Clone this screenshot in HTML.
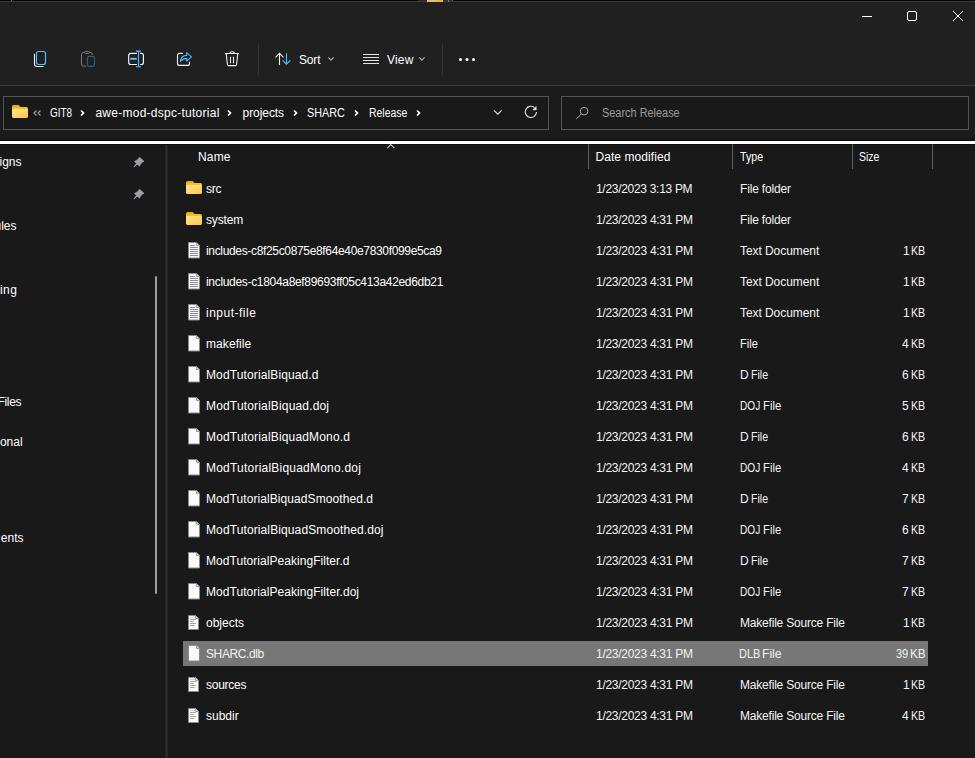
<!DOCTYPE html>
<html><head><meta charset="utf-8">
<style>
*{margin:0;padding:0;box-sizing:border-box}
html,body{width:975px;height:758px;overflow:hidden;background:#191919}
body{position:relative;font-family:"Liberation Sans",sans-serif;font-size:12px;color:#fff}
.abs{position:absolute}
.t{position:absolute;line-height:14px;white-space:nowrap;font-size:12px}
.t i{font-style:normal;letter-spacing:-0.62px}
.ic{position:absolute;overflow:visible}
#top{position:absolute;left:0;top:0;width:975px;height:85px;background:#202020}
#topline0{position:absolute;left:0;top:0;width:975px;height:1px;background:#050505}
#topline1{position:absolute;left:0;top:1px;width:975px;height:1px;background:#3a3a3a}
#sep85{position:absolute;left:0;top:85px;width:975px;height:1px;background:#3c3c3c}
#addrrow{position:absolute;left:0;top:86px;width:975px;height:54px;background:#1b1b1b}
.box{position:absolute;border:1px solid #555;background:#191919}
#blk{position:absolute;left:0;top:140px;width:975px;height:1px;background:#0a0a0a}
#wht{position:absolute;left:0;top:141px;width:975px;height:3px;background:#fff}
#blk2{position:absolute;left:0;top:144px;width:975px;height:1px;background:#101010}
#divider{position:absolute;left:164px;top:145px;width:4px;height:613px;background:linear-gradient(90deg,#161616 0 1px,#252525 1px 2px,#2f2f2f 2px 3px,#232323 3px 4px)}
#thumb{position:absolute;left:155px;top:276px;width:2px;height:318px;background:#9f9f9f;border-radius:1px}
.cd{position:absolute;top:144px;width:1px;height:25px;background:#5e5e5e}
.sel{position:absolute;left:183px;width:745px;height:25px;background:#777}
.nm{color:#fff}
.dt,.ty,.sz{color:#f4f4f4}
.s{color:#f2f2f2}
.nv{color:#fff}
.tb{color:#fff}
.hd{color:#fff}
.ph{color:#9c9c9c}
</style></head><body>
<div id="top"></div>
<div id="topline0"></div>
<div id="topline1"></div>
<div class="abs" style="left:418px;top:0;width:9px;height:1px;background:#2a2a2a"></div>
<div class="abs" style="left:427px;top:0;width:16px;height:2px;background:linear-gradient(90deg,#d6c58a,#e2b44c)"></div>
<div class="abs" style="left:443px;top:0;width:10px;height:1px;background:#2e2e2e"></div>
<div class="abs" style="left:448px;top:0;width:1px;height:2px;background:#777"></div>
<div class="abs" style="left:452px;top:0;width:1px;height:1px;background:#555"></div>
<div class="abs" style="left:11px;top:0;width:1px;height:1px;background:#666"></div>

<!-- window controls -->
<svg class="ic" style="left:852px;top:10px" width="112" height="12" viewBox="0 0 112 12">
 <path d="M10 6.5h10" stroke="#fff" stroke-width="1"/>
 <rect x="55.5" y="1.5" width="9" height="9" rx="1.5" fill="none" stroke="#fff" stroke-width="1"/>
 <path d="M101 1l10 10M111 1l-10 10" stroke="#fff" stroke-width="1"/>
</svg>

<!-- toolbar icons -->
<svg class="ic" style="left:30px;top:48px" width="220" height="22" viewBox="0 0 220 22">
 <!-- copy -->
 <path d="M4.5 5.8v10.2a2.5 2.5 0 0 0 2.5 2.5h6.5" fill="none" stroke="#f0f0f0" stroke-width="1.1"/>
 <rect x="6.5" y="3.5" width="9" height="13" rx="2" fill="none" stroke="#4cc2ff" stroke-width="1.2"/>
 <!-- paste (disabled) -->
 <path d="M56 18.2h-2.5a2 2 0 0 1-2-2V6.4a2 2 0 0 1 2-2h6.8a2 2 0 0 1 2 2v0.6" fill="none" stroke="#7c7c7c" stroke-width="1"/>
 <rect x="54.6" y="3.4" width="4.8" height="2" rx="1" fill="#202020" stroke="#7c7c7c" stroke-width="1"/>
 <rect x="57.4" y="8.4" width="7.1" height="10" rx="1.8" fill="none" stroke="#2a6386" stroke-width="1.1"/>
 <!-- rename -->
 <path d="M107 5.4h-6.3a2 2 0 0 0-2 2v7.1a2 2 0 0 0 2 2h6.3M110 5.4h1.4a2 2 0 0 1 2 2v7.1a2 2 0 0 1-2 2h-1.4" fill="none" stroke="#f0f0f0" stroke-width="1.2"/>
 <path d="M108.5 3.3v15.2M106 3.1h5M106 18.7h5" fill="none" stroke="#4cc2ff" stroke-width="1.1"/>
 <path d="M100.3 10.8h6.4" stroke="#4cc2ff" stroke-width="2"/>
 <!-- share -->
 <path d="M153 5.4h-3.5a2 2 0 0 0-2 2v8a2 2 0 0 0 2 2h8a2 2 0 0 0 2-2v-1.7" fill="none" stroke="#f0f0f0" stroke-width="1.1"/>
 <path d="M150.3 13.3C151 9.5 153.5 7.4 156.7 7.4V4.6L161.4 8.9L156.7 13.2V10.4C154.2 10.4 152.2 11.4 150.3 13.3z" fill="none" stroke="#4cc2ff" stroke-width="1.1" stroke-linejoin="round"/>
 <!-- delete -->
 <path d="M195 5.5h14M200 5.4a2.2 1.7 0 0 1 4.4 0" fill="none" stroke="#f0f0f0" stroke-width="1.1"/>
 <path d="M196.2 5.6l1.2 10.6a1.5 1.5 0 0 0 1.5 1.4h6.2a1.5 1.5 0 0 0 1.5-1.4l1.2-10.6M200.5 8.8v6.4M203.5 8.8v6.4" fill="none" stroke="#f0f0f0" stroke-width="1.1"/>
</svg>
<div class="abs" style="left:258px;top:43px;width:1px;height:32px;background:#333"></div>
<div class="abs" style="left:442px;top:43px;width:1px;height:32px;background:#333"></div>
<svg class="ic" style="left:270px;top:48px" width="210" height="22" viewBox="0 0 210 22">
 <path d="M9.5 17V5.6M5.5 9.4l4-4 4 4" fill="none" stroke="#f0f0f0" stroke-width="1.1"/>
 <path d="M16.5 5.2v10.6M12.6 12.3l3.9 3.9 3.9-3.9" fill="none" stroke="#4cc2ff" stroke-width="1.1"/>
 <path d="M58.3 9.3l2.7 2.8 2.7-2.8" fill="none" stroke="#b4b4b4" stroke-width="1.1"/>
 <path d="M93 6.5h16M93 9.5h16M93 12.5h16M93 15.5h16" stroke="#e6e6e6" stroke-width="1"/>
 <path d="M149.2 9.3l2.7 2.8 2.7-2.8" fill="none" stroke="#b4b4b4" stroke-width="1.1"/>
 <circle cx="190.5" cy="11.5" r="1.5" fill="#fff"/>
 <circle cx="197" cy="11.5" r="1.5" fill="#fff"/>
 <circle cx="203.5" cy="11.5" r="1.5" fill="#fff"/>
</svg>

<div id="sep85"></div>
<div id="addrrow"></div>
<div class="box" style="left:3px;top:96px;width:546px;height:34px"></div>
<div class="box" style="left:561px;top:96px;width:408px;height:34px"></div>

<!-- address contents -->
<svg class="ic" style="left:12px;top:105px" width="16" height="13" viewBox="0 0 16 13"><defs><linearGradient id="afg" x1="0" y1="0" x2="1" y2="1"><stop offset="0" stop-color="#ffe59a"/><stop offset="1" stop-color="#fdc73f"/></linearGradient></defs><path d="M1.5 0h5.2l1.6 1.6V5H0V1.5A1.5 1.5 0 0 1 1.5 0z" fill="#ebaa0a"/><rect x="0" y="2" width="16" height="4" rx="1.5" fill="#f4bd2c"/><rect x="0" y="3.9" width="16" height="9.1" rx="1.4" fill="url(#afg)"/></svg>
<svg class="ic" style="left:30px;top:104px" width="400" height="16" viewBox="0 0 400 16">
 <path d="M6.5 6.5l-2.5 2.5 2.5 2.5M10.5 6.5l-2.5 2.5 2.5 2.5" fill="none" stroke="#a0a0a0" stroke-width="1.2"/>
 <path d="M51 6.5l2.5 2.5-2.5 2.5" fill="none" stroke="#fff" stroke-width="1.7"/>
 <path d="M198 6.5l2.5 2.5-2.5 2.5" fill="none" stroke="#fff" stroke-width="1.7"/>
 <path d="M264 6.5l2.5 2.5-2.5 2.5" fill="none" stroke="#fff" stroke-width="1.7"/>
 <path d="M325 6.5l2.5 2.5-2.5 2.5" fill="none" stroke="#fff" stroke-width="1.7"/>
 <path d="M387 6.5l2.5 2.5-2.5 2.5" fill="none" stroke="#fff" stroke-width="1.7"/>
</svg>
<svg class="ic" style="left:488px;top:102px" width="56" height="20" viewBox="0 0 56 20">
 <path d="M6 8.3l3.8 3.8 3.8-3.8" fill="none" stroke="#e0e0e0" stroke-width="1.1"/>
 <path d="M46.5 5.6A5.6 5.6 0 1 0 48.5 10.1" fill="none" stroke="#e0e0e0" stroke-width="1.15"/>
 <path d="M48.3 4.3V7.9H44.7Z" fill="#e8e8e8" stroke="#e8e8e8" stroke-width="0.4" stroke-linejoin="round"/>
</svg>
<svg class="ic" style="left:574px;top:105px" width="16" height="16" viewBox="0 0 16 16">
 <circle cx="10.1" cy="6.2" r="3.8" fill="none" stroke="#a8a8a8" stroke-width="1"/>
 <path d="M7.4 8.9L2.2 14" stroke="#a8a8a8" stroke-width="1"/>
</svg>

<div id="blk"></div>
<div id="wht"></div>
<div id="blk2"></div>

<!-- nav pane -->
<svg class="ic" style="left:133px;top:156px" width="12" height="44" viewBox="0 0 12 44">
 <g id="pin" fill="#9ba3a8" stroke="#9ba3a8" stroke-width="0.6" stroke-linejoin="round">
 <path d="M6.6 1.2L11 5.2L8.4 6.9L6.3 10.2L1.4 5.6L4.7 3.6Z"/>
 <path d="M4.2 7.6L1.1 10.8" stroke-width="1.3" fill="none"/>
 </g>
 <use href="#pin" y="32"/>
</svg>
<div id="thumb"></div>
<div id="divider"></div>

<!-- header -->
<svg class="ic" style="left:386px;top:143px" width="10" height="7" viewBox="0 0 10 7"><path d="M1.2 5.2l3.6-3.6 3.6 3.6" fill="none" stroke="#c4c4c4" stroke-width="1.1"/></svg>
<div class="cd" style="left:588px"></div>
<div class="cd" style="left:732px"></div>
<div class="cd" style="left:852px"></div>
<div class="cd" style="left:932px"></div>

<svg class="ic" style="left:186px;top:181px" width="16" height="13" viewBox="0 0 16 13"><defs><linearGradient id="fg0" x1="0" y1="0" x2="1" y2="1"><stop offset="0" stop-color="#ffe59a"/><stop offset="1" stop-color="#fdc73f"/></linearGradient></defs><path d="M1.5 0h5.2l1.6 1.6V5H0V1.5A1.5 1.5 0 0 1 1.5 0z" fill="#ebaa0a"/><rect x="0" y="2" width="16" height="4" rx="1.5" fill="#f4bd2c"/><rect x="0" y="3.9" width="16" height="9.1" rx="1.4" fill="url(#fg0)"/></svg>
<svg class="ic" style="left:186px;top:212px" width="16" height="13" viewBox="0 0 16 13"><defs><linearGradient id="fg1" x1="0" y1="0" x2="1" y2="1"><stop offset="0" stop-color="#ffe59a"/><stop offset="1" stop-color="#fdc73f"/></linearGradient></defs><path d="M1.5 0h5.2l1.6 1.6V5H0V1.5A1.5 1.5 0 0 1 1.5 0z" fill="#ebaa0a"/><rect x="0" y="2" width="16" height="4" rx="1.5" fill="#f4bd2c"/><rect x="0" y="3.9" width="16" height="9.1" rx="1.4" fill="url(#fg1)"/></svg>
<svg class="ic" style="left:187px;top:242px" width="14" height="17" viewBox="0 0 14 17"><path d="M1.5 0.5h8l3 3v12.5h-11z" fill="#fafafa" stroke="#8a8a8a" stroke-width="1"/><path d="M9.5 0.5v3h3" fill="#d8d8d8" stroke="#9a9a9a" stroke-width="1"/><path d="M3 3.5h5M3 5.5h8M3 7.5h8M3 9.5h8M3 11.5h8M3 13.5h8" stroke="#8c8c8c" stroke-width="1"/></svg>
<svg class="ic" style="left:187px;top:273px" width="14" height="17" viewBox="0 0 14 17"><path d="M1.5 0.5h8l3 3v12.5h-11z" fill="#fafafa" stroke="#8a8a8a" stroke-width="1"/><path d="M9.5 0.5v3h3" fill="#d8d8d8" stroke="#9a9a9a" stroke-width="1"/><path d="M3 3.5h5M3 5.5h8M3 7.5h8M3 9.5h8M3 11.5h8M3 13.5h8" stroke="#8c8c8c" stroke-width="1"/></svg>
<svg class="ic" style="left:187px;top:304px" width="14" height="17" viewBox="0 0 14 17"><path d="M1.5 0.5h8l3 3v12.5h-11z" fill="#fafafa" stroke="#8a8a8a" stroke-width="1"/><path d="M9.5 0.5v3h3" fill="#d8d8d8" stroke="#9a9a9a" stroke-width="1"/><path d="M3 3.5h5M3 5.5h8M3 7.5h8M3 9.5h8M3 11.5h8M3 13.5h8" stroke="#8c8c8c" stroke-width="1"/></svg>
<svg class="ic" style="left:187px;top:335px" width="14" height="17" viewBox="0 0 14 17"><path d="M1.5 0.5h8l3 3v12.5h-11z" fill="#fafafa" stroke="#8a8a8a" stroke-width="1"/><path d="M9.5 0.5v3h3" fill="#d8d8d8" stroke="#9a9a9a" stroke-width="1"/></svg>
<svg class="ic" style="left:187px;top:366px" width="14" height="17" viewBox="0 0 14 17"><path d="M1.5 0.5h8l3 3v12.5h-11z" fill="#fafafa" stroke="#8a8a8a" stroke-width="1"/><path d="M9.5 0.5v3h3" fill="#d8d8d8" stroke="#9a9a9a" stroke-width="1"/></svg>
<svg class="ic" style="left:187px;top:397px" width="14" height="17" viewBox="0 0 14 17"><path d="M1.5 0.5h8l3 3v12.5h-11z" fill="#fafafa" stroke="#8a8a8a" stroke-width="1"/><path d="M9.5 0.5v3h3" fill="#d8d8d8" stroke="#9a9a9a" stroke-width="1"/></svg>
<svg class="ic" style="left:187px;top:428px" width="14" height="17" viewBox="0 0 14 17"><path d="M1.5 0.5h8l3 3v12.5h-11z" fill="#fafafa" stroke="#8a8a8a" stroke-width="1"/><path d="M9.5 0.5v3h3" fill="#d8d8d8" stroke="#9a9a9a" stroke-width="1"/></svg>
<svg class="ic" style="left:187px;top:459px" width="14" height="17" viewBox="0 0 14 17"><path d="M1.5 0.5h8l3 3v12.5h-11z" fill="#fafafa" stroke="#8a8a8a" stroke-width="1"/><path d="M9.5 0.5v3h3" fill="#d8d8d8" stroke="#9a9a9a" stroke-width="1"/></svg>
<svg class="ic" style="left:187px;top:490px" width="14" height="17" viewBox="0 0 14 17"><path d="M1.5 0.5h8l3 3v12.5h-11z" fill="#fafafa" stroke="#8a8a8a" stroke-width="1"/><path d="M9.5 0.5v3h3" fill="#d8d8d8" stroke="#9a9a9a" stroke-width="1"/></svg>
<svg class="ic" style="left:187px;top:521px" width="14" height="17" viewBox="0 0 14 17"><path d="M1.5 0.5h8l3 3v12.5h-11z" fill="#fafafa" stroke="#8a8a8a" stroke-width="1"/><path d="M9.5 0.5v3h3" fill="#d8d8d8" stroke="#9a9a9a" stroke-width="1"/></svg>
<svg class="ic" style="left:187px;top:552px" width="14" height="17" viewBox="0 0 14 17"><path d="M1.5 0.5h8l3 3v12.5h-11z" fill="#fafafa" stroke="#8a8a8a" stroke-width="1"/><path d="M9.5 0.5v3h3" fill="#d8d8d8" stroke="#9a9a9a" stroke-width="1"/></svg>
<svg class="ic" style="left:187px;top:583px" width="14" height="17" viewBox="0 0 14 17"><path d="M1.5 0.5h8l3 3v12.5h-11z" fill="#fafafa" stroke="#8a8a8a" stroke-width="1"/><path d="M9.5 0.5v3h3" fill="#d8d8d8" stroke="#9a9a9a" stroke-width="1"/></svg>
<svg class="ic" style="left:187px;top:615px" width="13" height="16" viewBox="0 0 13 16"><path d="M1.5 0.5h7l3 3v11h-10z" fill="#fafafa" stroke="#8a8a8a" stroke-width="1"/><path d="M8.5 0.5v3h3" fill="#dcdcdc" stroke="#a0a0a0" stroke-width="1"/><path d="M3.3 2.5h4.5" stroke="#cfcfcf" stroke-width="1"/><path d="M3 4.5h6M3 6.5h3.6M3 8.5h6M3 10.5h4.5" stroke="#a4a4a4" stroke-width="1"/></svg>
<div class="sel" style="top:641px"></div>
<svg class="ic" style="left:187px;top:645px" width="14" height="17" viewBox="0 0 14 17"><path d="M1.5 0.5h8l3 3v12.5h-11z" fill="#fafafa" stroke="#8a8a8a" stroke-width="1"/><path d="M9.5 0.5v3h3" fill="#d8d8d8" stroke="#9a9a9a" stroke-width="1"/></svg>
<svg class="ic" style="left:187px;top:677px" width="13" height="16" viewBox="0 0 13 16"><path d="M1.5 0.5h7l3 3v11h-10z" fill="#fafafa" stroke="#8a8a8a" stroke-width="1"/><path d="M8.5 0.5v3h3" fill="#dcdcdc" stroke="#a0a0a0" stroke-width="1"/><path d="M3.3 2.5h4.5" stroke="#cfcfcf" stroke-width="1"/><path d="M3 4.5h6M3 6.5h3.6M3 8.5h6M3 10.5h4.5" stroke="#a4a4a4" stroke-width="1"/></svg>
<svg class="ic" style="left:187px;top:708px" width="13" height="16" viewBox="0 0 13 16"><path d="M1.5 0.5h7l3 3v11h-10z" fill="#fafafa" stroke="#8a8a8a" stroke-width="1"/><path d="M8.5 0.5v3h3" fill="#dcdcdc" stroke="#a0a0a0" stroke-width="1"/><path d="M3.3 2.5h4.5" stroke="#cfcfcf" stroke-width="1"/><path d="M3 4.5h6M3 6.5h3.6M3 8.5h6M3 10.5h4.5" stroke="#a4a4a4" stroke-width="1"/></svg>
<div id="n0" class="t nm" style="top:182px;left:206.00px;letter-spacing:-0.250px;">src</div>
<div id="d0" class="t dt" style="top:182px;left:596.00px;letter-spacing:-0.300px;">1/23/2023 3:13 PM</div>
<div id="y0" class="t ty" style="top:182px;left:740.00px;letter-spacing:-0.170px;">File folder</div>
<div id="n1" class="t nm" style="top:213px;left:206.00px;letter-spacing:-0.160px;">system</div>
<div id="d1" class="t dt" style="top:213px;left:596.00px;letter-spacing:-0.281px;">1/23/2023 4:31 PM</div>
<div id="y1" class="t ty" style="top:213px;left:740.00px;letter-spacing:-0.170px;">File folder</div>
<div id="n2" class="t nm" style="top:244px;left:206.00px;letter-spacing:-0.338px;">includes-c8f25c0875e8f64e40e7830f099e5ca9</div>
<div id="d2" class="t dt" style="top:244px;left:596.00px;letter-spacing:-0.281px;">1/23/2023 4:31 PM</div>
<div id="y2" class="t ty" style="top:244px;left:740.00px;letter-spacing:-0.067px;">Text Document</div>
<div id="z2a" class="t sz" style="top:244px;left:903.00px;">1</div>
<div id="z2b" class="t sz" style="top:244px;left:911.00px;transform:scaleX(0.8867);transform-origin:0 0;">KB</div>
<div id="n3" class="t nm" style="top:275px;left:206.00px;letter-spacing:-0.317px;">includes-c1804a8ef89693ff05c413a42ed6db21</div>
<div id="d3" class="t dt" style="top:275px;left:596.00px;letter-spacing:-0.281px;">1/23/2023 4:31 PM</div>
<div id="y3" class="t ty" style="top:275px;left:740.00px;letter-spacing:-0.067px;">Text Document</div>
<div id="z3a" class="t sz" style="top:275px;left:903.00px;">1</div>
<div id="z3b" class="t sz" style="top:275px;left:911.00px;transform:scaleX(0.8867);transform-origin:0 0;">KB</div>
<div id="n4" class="t nm" style="top:306px;left:206.00px;letter-spacing:0.500px;">input-file</div>
<div id="d4" class="t dt" style="top:306px;left:596.00px;letter-spacing:-0.281px;">1/23/2023 4:31 PM</div>
<div id="y4" class="t ty" style="top:306px;left:740.00px;letter-spacing:-0.067px;">Text Document</div>
<div id="z4a" class="t sz" style="top:306px;left:903.00px;">1</div>
<div id="z4b" class="t sz" style="top:306px;left:911.00px;transform:scaleX(0.8867);transform-origin:0 0;">KB</div>
<div id="n5" class="t nm" style="top:337px;left:206.00px;letter-spacing:0.071px;">makefile</div>
<div id="d5" class="t dt" style="top:337px;left:596.00px;letter-spacing:-0.281px;">1/23/2023 4:31 PM</div>
<div id="y5" class="t ty" style="top:337px;left:740.00px;transform:scaleX(0.9278);transform-origin:0 0;">File</div>
<div id="z5a" class="t sz" style="top:337px;left:902.00px;">4</div>
<div id="z5b" class="t sz" style="top:337px;left:911.00px;transform:scaleX(0.8867);transform-origin:0 0;">KB</div>
<div id="n6" class="t nm" style="top:368px;left:206.00px;letter-spacing:0.122px;">ModTutorialBiquad.d</div>
<div id="d6" class="t dt" style="top:368px;left:596.00px;letter-spacing:-0.281px;">1/23/2023 4:31 PM</div>
<div id="y6a" class="t ty" style="top:368px;left:740.00px;">D</div>
<div id="y6b" class="t ty" style="top:368px;left:751.00px;transform:scaleX(0.8869);transform-origin:0 0;">File</div>
<div id="z6a" class="t sz" style="top:368px;left:902.00px;">6</div>
<div id="z6b" class="t sz" style="top:368px;left:911.00px;transform:scaleX(0.8867);transform-origin:0 0;">KB</div>
<div id="n7" class="t nm" style="top:399px;left:206.00px;letter-spacing:0.170px;">ModTutorialBiquad.doj</div>
<div id="d7" class="t dt" style="top:399px;left:596.00px;letter-spacing:-0.281px;">1/23/2023 4:31 PM</div>
<div id="y7a" class="t ty" style="top:399px;left:740.00px;transform:scaleX(0.8427);transform-origin:0 0;">DOJ</div>
<div id="y7b" class="t ty" style="top:399px;left:762.90px;transform:scaleX(0.9392);transform-origin:0 0;">File</div>
<div id="z7a" class="t sz" style="top:399px;left:902.00px;">5</div>
<div id="z7b" class="t sz" style="top:399px;left:911.00px;transform:scaleX(0.8867);transform-origin:0 0;">KB</div>
<div id="n8" class="t nm" style="top:430px;left:206.00px;letter-spacing:0.164px;">ModTutorialBiquadMono.d</div>
<div id="d8" class="t dt" style="top:430px;left:596.00px;letter-spacing:-0.281px;">1/23/2023 4:31 PM</div>
<div id="y8a" class="t ty" style="top:430px;left:740.00px;">D</div>
<div id="y8b" class="t ty" style="top:430px;left:751.00px;transform:scaleX(0.8869);transform-origin:0 0;">File</div>
<div id="z8a" class="t sz" style="top:430px;left:902.00px;">6</div>
<div id="z8b" class="t sz" style="top:430px;left:911.00px;transform:scaleX(0.8867);transform-origin:0 0;">KB</div>
<div id="n9" class="t nm" style="top:461px;left:206.00px;letter-spacing:0.217px;">ModTutorialBiquadMono.doj</div>
<div id="d9" class="t dt" style="top:461px;left:596.00px;letter-spacing:-0.281px;">1/23/2023 4:31 PM</div>
<div id="y9a" class="t ty" style="top:461px;left:740.00px;transform:scaleX(0.8427);transform-origin:0 0;">DOJ</div>
<div id="y9b" class="t ty" style="top:461px;left:762.90px;transform:scaleX(0.9392);transform-origin:0 0;">File</div>
<div id="z9a" class="t sz" style="top:461px;left:902.00px;">4</div>
<div id="z9b" class="t sz" style="top:461px;left:911.00px;transform:scaleX(0.8867);transform-origin:0 0;">KB</div>
<div id="n10" class="t nm" style="top:492px;left:206.00px;letter-spacing:0.077px;">ModTutorialBiquadSmoothed.d</div>
<div id="d10" class="t dt" style="top:492px;left:596.00px;letter-spacing:-0.281px;">1/23/2023 4:31 PM</div>
<div id="y10a" class="t ty" style="top:492px;left:740.00px;">D</div>
<div id="y10b" class="t ty" style="top:492px;left:751.00px;transform:scaleX(0.8869);transform-origin:0 0;">File</div>
<div id="z10a" class="t sz" style="top:492px;left:902.00px;">7</div>
<div id="z10b" class="t sz" style="top:492px;left:911.00px;transform:scaleX(0.8867);transform-origin:0 0;">KB</div>
<div id="n11" class="t nm" style="top:523px;left:206.00px;letter-spacing:0.111px;">ModTutorialBiquadSmoothed.doj</div>
<div id="d11" class="t dt" style="top:523px;left:596.00px;letter-spacing:-0.281px;">1/23/2023 4:31 PM</div>
<div id="y11a" class="t ty" style="top:523px;left:740.00px;transform:scaleX(0.8427);transform-origin:0 0;">DOJ</div>
<div id="y11b" class="t ty" style="top:523px;left:762.90px;transform:scaleX(0.9392);transform-origin:0 0;">File</div>
<div id="z11a" class="t sz" style="top:523px;left:902.00px;">6</div>
<div id="z11b" class="t sz" style="top:523px;left:911.00px;transform:scaleX(0.8867);transform-origin:0 0;">KB</div>
<div id="n12" class="t nm" style="top:554px;left:206.00px;letter-spacing:0.048px;">ModTutorialPeakingFilter.d</div>
<div id="d12" class="t dt" style="top:554px;left:596.00px;letter-spacing:-0.281px;">1/23/2023 4:31 PM</div>
<div id="y12a" class="t ty" style="top:554px;left:740.00px;">D</div>
<div id="y12b" class="t ty" style="top:554px;left:751.00px;transform:scaleX(0.8869);transform-origin:0 0;">File</div>
<div id="z12a" class="t sz" style="top:554px;left:902.00px;">7</div>
<div id="z12b" class="t sz" style="top:554px;left:911.00px;transform:scaleX(0.8867);transform-origin:0 0;">KB</div>
<div id="n13" class="t nm" style="top:585px;left:206.00px;letter-spacing:0.052px;">ModTutorialPeakingFilter.doj</div>
<div id="d13" class="t dt" style="top:585px;left:596.00px;letter-spacing:-0.281px;">1/23/2023 4:31 PM</div>
<div id="y13a" class="t ty" style="top:585px;left:740.00px;transform:scaleX(0.8427);transform-origin:0 0;">DOJ</div>
<div id="y13b" class="t ty" style="top:585px;left:762.90px;transform:scaleX(0.9392);transform-origin:0 0;">File</div>
<div id="z13a" class="t sz" style="top:585px;left:902.00px;">7</div>
<div id="z13b" class="t sz" style="top:585px;left:911.00px;transform:scaleX(0.8867);transform-origin:0 0;">KB</div>
<div id="n14" class="t nm" style="top:616px;left:206.00px;">objects</div>
<div id="d14" class="t dt" style="top:616px;left:596.00px;letter-spacing:-0.281px;">1/23/2023 4:31 PM</div>
<div id="y14" class="t ty" style="top:616px;left:740.00px;letter-spacing:-0.200px;">Makefile Source File</div>
<div id="z14a" class="t sz" style="top:616px;left:903.00px;">1</div>
<div id="z14b" class="t sz" style="top:616px;left:911.00px;transform:scaleX(0.8867);transform-origin:0 0;">KB</div>
<div id="n15" class="t nm s" style="top:647px;left:206.00px;letter-spacing:-0.388px;">SHARC.dlb</div>
<div id="d15" class="t dt s" style="top:647px;left:596.00px;letter-spacing:-0.281px;">1/23/2023 4:31 PM</div>
<div id="y15a" class="t ty s" style="top:647px;left:739.00px;transform:scaleX(0.9130);transform-origin:0 0;">DLB</div>
<div id="y15b" class="t ty s" style="top:647px;left:762.20px;transform:scaleX(1.0096);transform-origin:0 0;">File</div>
<div id="z15a" class="t sz s" style="top:647px;left:896.00px;transform:scaleX(0.9167);transform-origin:0 0;">39</div>
<div id="z15b" class="t sz s" style="top:647px;left:910.20px;transform:scaleX(0.9827);transform-origin:0 0;">KB</div>
<div id="n16" class="t nm" style="top:678px;left:206.00px;letter-spacing:-0.267px;">sources</div>
<div id="d16" class="t dt" style="top:678px;left:596.00px;letter-spacing:-0.281px;">1/23/2023 4:31 PM</div>
<div id="y16" class="t ty" style="top:678px;left:740.00px;letter-spacing:-0.200px;">Makefile Source File</div>
<div id="z16a" class="t sz" style="top:678px;left:903.00px;">1</div>
<div id="z16b" class="t sz" style="top:678px;left:911.00px;transform:scaleX(0.8867);transform-origin:0 0;">KB</div>
<div id="n17" class="t nm" style="top:709px;left:206.00px;">subdir</div>
<div id="d17" class="t dt" style="top:709px;left:596.00px;letter-spacing:-0.281px;">1/23/2023 4:31 PM</div>
<div id="y17" class="t ty" style="top:709px;left:740.00px;letter-spacing:-0.200px;">Makefile Source File</div>
<div id="z17a" class="t sz" style="top:709px;left:902.00px;">4</div>
<div id="z17b" class="t sz" style="top:709px;left:911.00px;transform:scaleX(0.8867);transform-origin:0 0;">KB</div>
<div id="hName" class="t hd" style="top:150px;left:198.00px;letter-spacing:0.167px;">Name</div>
<div id="hDate" class="t hd" style="top:150px;left:595.50px;letter-spacing:0.067px;">Date modified</div>
<div id="hType" class="t hd" style="top:150px;left:740.00px;transform:scaleX(0.8880);transform-origin:0 0;">Type</div>
<div id="hSize" class="t hd" style="top:150px;left:859.00px;transform:scaleX(0.8727);transform-origin:0 0;">Size</div>
<div id="tSort" class="t tb" style="top:53px;left:299.00px;letter-spacing:-0.167px;">Sort</div>
<div id="tView" class="t tb" style="top:53px;left:387.00px;letter-spacing:0.167px;">View</div>
<div id="aGit" class="t tb" style="top:106px;left:49.50px;transform:scaleX(0.8304);transform-origin:0 0;">GIT8</div>
<div id="aAwe" class="t tb" style="top:106px;left:95.40px;letter-spacing:0.260px;">awe-mod-dspc-tutorial</div>
<div id="aProj" class="t tb" style="top:106px;left:242.60px;letter-spacing:-0.071px;">projects</div>
<div id="aSharc" class="t tb" style="top:106px;left:307.40px;transform:scaleX(0.9025);transform-origin:0 0;">SHARC</div>
<div id="aRel" class="t tb" style="top:106px;left:368.50px;transform:scaleX(0.8704);transform-origin:0 0;">Release</div>
<div id="sSearch" class="t ph" style="top:106px;left:602.40px;transform:scaleX(0.9099);transform-origin:0 0;">Search Release</div>
<div id="nvigns" class="t nv" style="top:155px;right:953.5px;">igns</div>
<div id="nvules" class="t nv" style="top:219px;right:958.5px;">ules</div>
<div id="nvonal" class="t nv" style="top:435px;right:952.4px;">onal</div>
<div id="nvents" class="t nv" style="top:531px;right:951.5px;">ents</div>
<div id="nving" class="t nv" style="top:283px;left:0.00px;letter-spacing:0.450px;">ing</div>
<div id="nvFiles" class="t nv" style="top:395px;right:953.7px;letter-spacing:-0.300px;">Files</div>
</body></html>
